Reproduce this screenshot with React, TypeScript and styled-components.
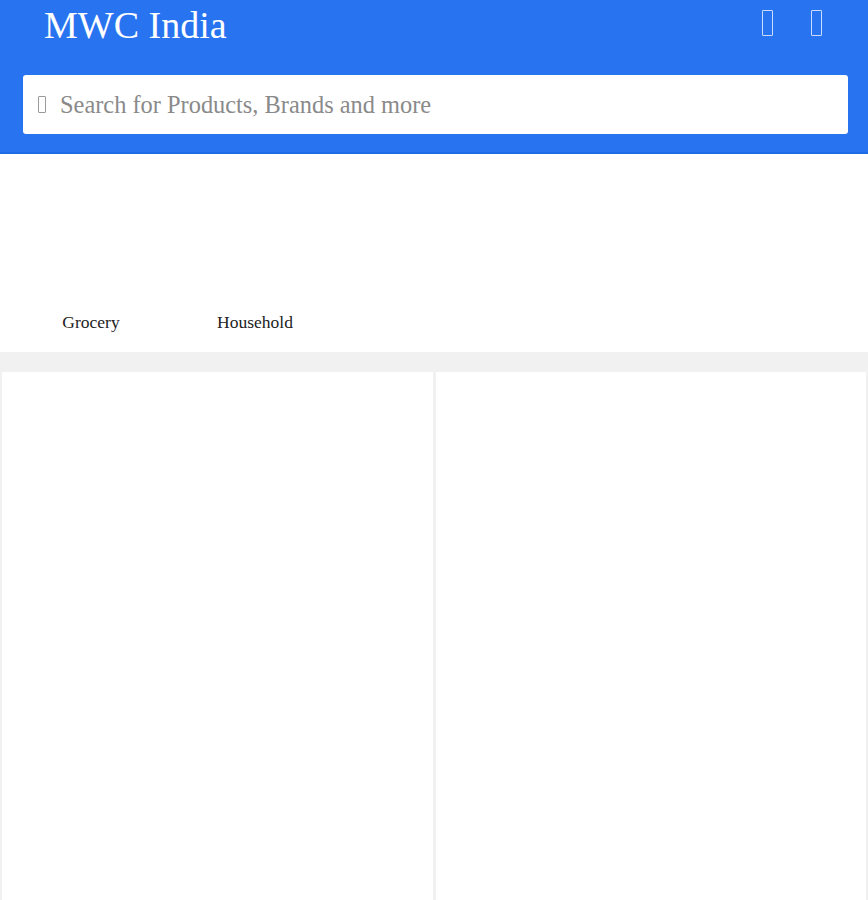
import styled, { createGlobalStyle } from "styled-components";

const Global = createGlobalStyle`
    html, body {
        margin: 0;
        padding: 0;
        background: #ffffff;
        font-family: "Liberation Serif", "Times New Roman", serif;
    }
`;

const Header = styled.header`
    background-color: #2874f0;
    height: 152px;
    border-bottom: 2px solid #1f6ae6;
    display: flex;
    flex-direction: column;
`;

const TopRow = styled.div`
    display: flex;
    align-items: flex-start;
    justify-content: space-between;
    height: 75px;
    padding: 0 46px 0 44px;
`;

const Title = styled.h1`
    margin: 0;
    color: #ffffff;
    font-size: 38px;
    font-weight: 400;
    line-height: 50px;
`;

const Actions = styled.div`
    display: flex;
    gap: 38px;
    padding-top: 10px;
`;

// font icons that did not load: drawn as the empty glyph box
const Tofu = styled.span<{ $w: number; $h: number; $color: string }>`
    display: inline-block;
    box-sizing: border-box;
    width: ${(p) => p.$w}px;
    height: ${(p) => p.$h}px;
    border: 1.5px solid ${(p) => p.$color};
    border-radius: 1px;
`;

const SearchBox = styled.div`
    margin: 0 20px 0 23px;
    height: 59px;
    background: #ffffff;
    border-radius: 3px;
    display: flex;
    align-items: center;
    gap: 14px;
    padding-left: 15px;
`;

const Placeholder = styled.span`
    color: #8a8a8a;
    font-size: 24.4px;
`;

const Categories = styled.div`
    height: 198px;
    display: flex;
    align-items: flex-end;
    padding: 0 0 19px 9px;
    box-sizing: border-box;
`;

const Category = styled.div`
    width: 164px;
    text-align: center;
    font-size: 17.5px;
    color: #222222;
`;

const Feed = styled.div`
    background: #f1f1f1;
    padding: 20px 2px 0 2px;
    display: grid;
    grid-template-columns: 1fr 1fr;
    gap: 3px;
`;

const Card = styled.div`
    background: #ffffff;
    height: 540px;
`;

export default function App() {
    return (
        <>
            <Global />
            <Header>
                <TopRow>
                    <Title>MWC India</Title>
                    <Actions>
                        <Tofu $w={11} $h={26} $color="rgba(255,255,255,0.75)" />
                        <Tofu $w={11} $h={26} $color="rgba(255,255,255,0.75)" />
                    </Actions>
                </TopRow>
                <SearchBox>
                    <Tofu $w={8} $h={17} $color="#9a9a9a" />
                    <Placeholder>Search for Products, Brands and more</Placeholder>
                </SearchBox>
            </Header>
            <Categories>
                <Category>Grocery</Category>
                <Category>Household</Category>
            </Categories>
            <Feed>
                <Card />
                <Card />
            </Feed>
        </>
    );
}
